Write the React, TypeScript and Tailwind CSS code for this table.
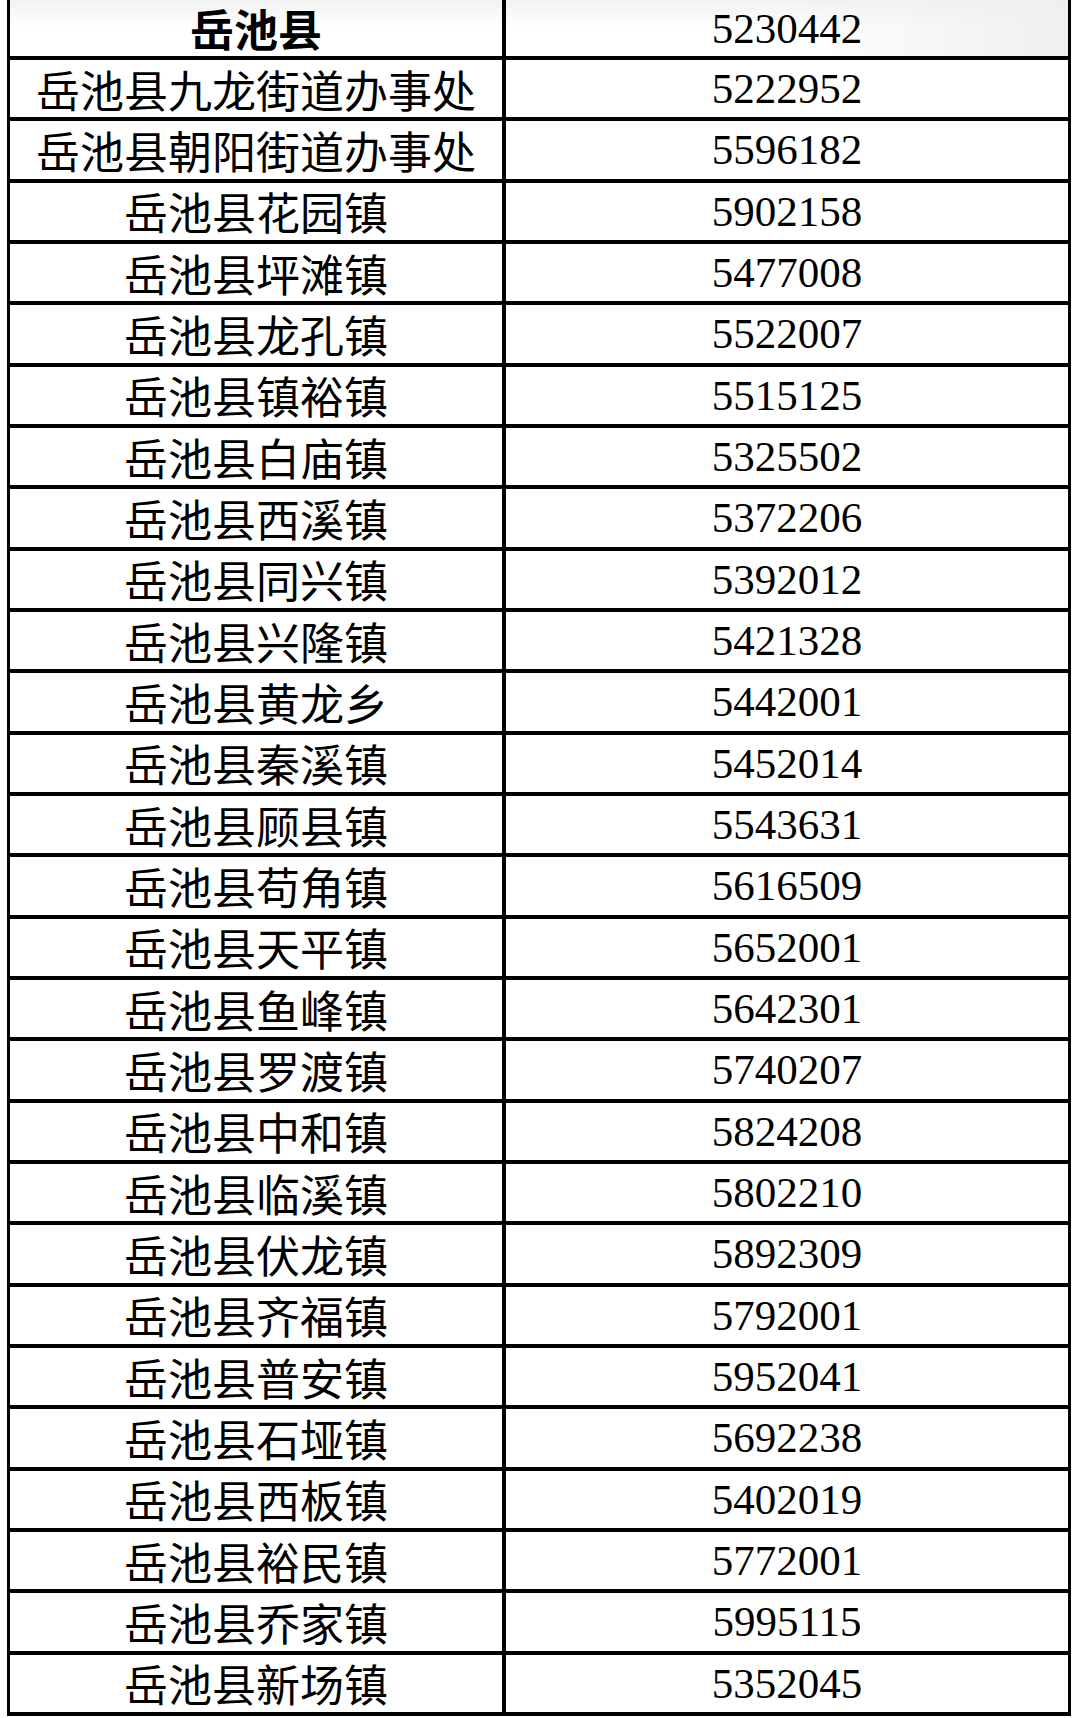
import React from "react";

// ── Data ──────────────────────────────────────────────────────────────────────
const rows: [string, string][] = [
  ["岳池县九龙街道办事处", "5222952"],
  ["岳池县朝阳街道办事处", "5596182"],
  ["岳池县花园镇", "5902158"],
  ["岳池县坪滩镇", "5477008"],
  ["岳池县龙孔镇", "5522007"],
  ["岳池县镇裕镇", "5515125"],
  ["岳池县白庙镇", "5325502"],
  ["岳池县西溪镇", "5372206"],
  ["岳池县同兴镇", "5392012"],
  ["岳池县兴隆镇", "5421328"],
  ["岳池县黄龙乡", "5442001"],
  ["岳池县秦溪镇", "5452014"],
  ["岳池县顾县镇", "5543631"],
  ["岳池县苟角镇", "5616509"],
  ["岳池县天平镇", "5652001"],
  ["岳池县鱼峰镇", "5642301"],
  ["岳池县罗渡镇", "5740207"],
  ["岳池县中和镇", "5824208"],
  ["岳池县临溪镇", "5802210"],
  ["岳池县伏龙镇", "5892309"],
  ["岳池县齐福镇", "5792001"],
  ["岳池县普安镇", "5952041"],
  ["岳池县石垭镇", "5692238"],
  ["岳池县西板镇", "5402019"],
  ["岳池县裕民镇", "5772001"],
  ["岳池县乔家镇", "5995115"],
  ["岳池县新场镇", "5352045"],
];

export default function App() {
  return (
    <div className="w-[1080px] h-[1718px] overflow-hidden bg-white">
      <div className="ml-[7px] w-[1064px] border-x-[3px] border-black">
        {/* ── Header row (top cut off) ── */}
        <div className="flex h-[60px] border-b-4 border-black bg-gradient-to-b from-[#f2f2f2] via-white to-white">
          <div className="flex w-[496px] items-center justify-center border-r-4 border-black font-['Noto_Sans_CJK_SC',sans-serif] text-[44px] font-bold leading-none text-black">
            岳池县
          </div>
          <div className="flex flex-1 items-center justify-center bg-gradient-to-r from-transparent via-transparent to-[#efefef] font-['Liberation_Serif',serif] text-[43px] leading-none text-black">
            5230442
          </div>
        </div>

        {/* ── Body rows ── */}
        {rows.map(([name, code]) => (
          <div key={name} className="flex h-[61.33px] border-b-4 border-black">
            <div className="flex w-[496px] items-center justify-center border-r-4 border-black font-['Noto_Sans_CJK_SC',sans-serif] text-[44px] leading-none text-black">
              {name}
            </div>
            <div className="flex flex-1 items-center justify-center font-['Liberation_Serif',serif] text-[43px] leading-none text-black">
              {code}
            </div>
          </div>
        ))}
      </div>
    </div>
  );
}
